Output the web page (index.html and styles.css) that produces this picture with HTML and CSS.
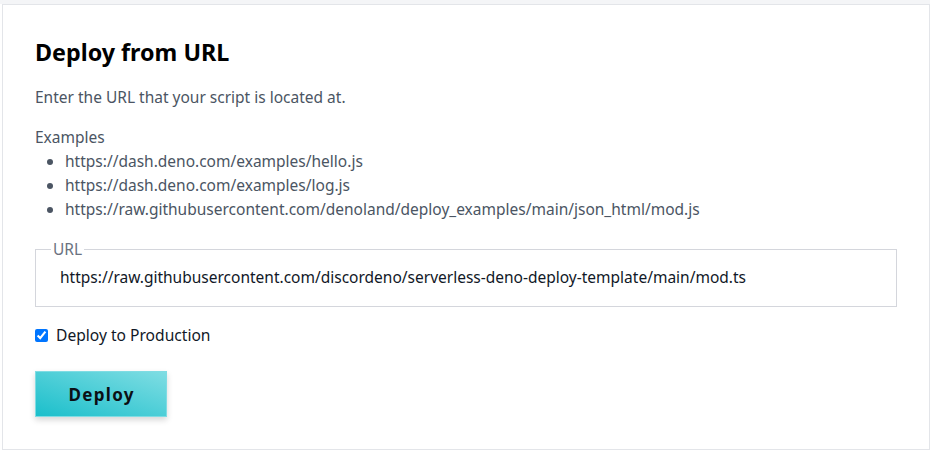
FILE: index.html
```html
<!DOCTYPE html>
<html lang="en">
<head>
<meta charset="utf-8">
<title>Deploy from URL</title>
<link rel="stylesheet" href="styles.css">
</head>
<body>
<main class="card">
  <h1 class="title">Deploy from URL</h1>
  <p class="intro">Enter the URL that your script is located at.</p>
  <div class="examples">
    <div class="examples-label">Examples</div>
    <ul class="examples-list">
      <li>https://dash.deno.com/examples/hello.js</li>
      <li>https://dash.deno.com/examples/log.js</li>
      <li>https://raw.githubusercontent.com/denoland/deploy_examples/main/json_html/mod.js</li>
    </ul>
  </div>
  <fieldset class="url-field">
    <legend class="url-legend">URL</legend>
    <input class="url-input" type="text" value="https://raw.githubusercontent.com/discordeno/serverless-deno-deploy-template/main/mod.ts">
  </fieldset>
  <label class="prod-row">
    <input class="prod-check" type="checkbox" checked>
    <span class="prod-label">Deploy to Production</span>
  </label>
  <button class="deploy-btn" type="button">Deploy</button>
</main>
</body>
</html>
```
FILE: styles.css
```css
html { background: #ffffff; }
body {
  margin: 0;
  border-top: 4px solid #f4f5f7;
  padding: 0 0 1px 2px;
  font-family: "Noto Sans", "DejaVu Sans", sans-serif;
  background: #ffffff;
}
.card {
  width: 928px;
  box-sizing: border-box;
  border: 1px solid #e3e5e9;
  padding: 32px;
  display: flex;
  flex-direction: column;
  align-items: flex-start;
}
.title {
  margin: 0;
  font-size: 23.3px;
  line-height: 30px;
  font-weight: 700;
  color: #000000;
}
.intro {
  margin: 18px 0 0;
  font-size: 15.5px;
  line-height: 24px;
  color: #4b5563;
}
.examples {
  margin-top: 16px;
  font-size: 15.5px;
  line-height: 24px;
  color: #4b5563;
}
.examples-list {
  margin: 0;
  padding-left: 30px;
}
.url-field {
  align-self: stretch;
  margin: 18px 0 0;
  border: 1px solid #d4d6dc;
  padding: 0 24px 11px;
  min-width: 0;
}
.url-legend {
  margin-left: -9px;
  padding: 0 2px;
  font-size: 15.5px;
  line-height: 20px;
  color: #6b7280;
}
.url-input {
  display: block;
  width: 100%;
  height: 36px;
  box-sizing: border-box;
  border: 0;
  padding: 0;
  margin: 0;
  outline: none;
  background: transparent;
  font-family: inherit;
  font-size: 15.5px;
  color: #111827;
}
.prod-row {
  margin-top: 16px;
  display: flex;
  align-items: center;
  gap: 8px;
  font-size: 15.6px;
  line-height: 24px;
  color: #111827;
}
.prod-check {
  margin: 0;
  width: 13px;
  height: 13px;
}
.deploy-btn {
  margin-top: 24px;
  width: 132px;
  height: 46px;
  box-sizing: border-box;
  border: 1px solid #7fdce3;
  background: linear-gradient(to top right, #1bbfcb, #7fdde3);
  box-shadow: 0 3px 6px rgba(0, 0, 0, 0.16);
  font-family: inherit;
  font-size: 17px;
  font-weight: 700;
  letter-spacing: 1.3px;
  color: #0b0f14;
  padding: 0 0 0 1.3px;
  cursor: pointer;
}
```
